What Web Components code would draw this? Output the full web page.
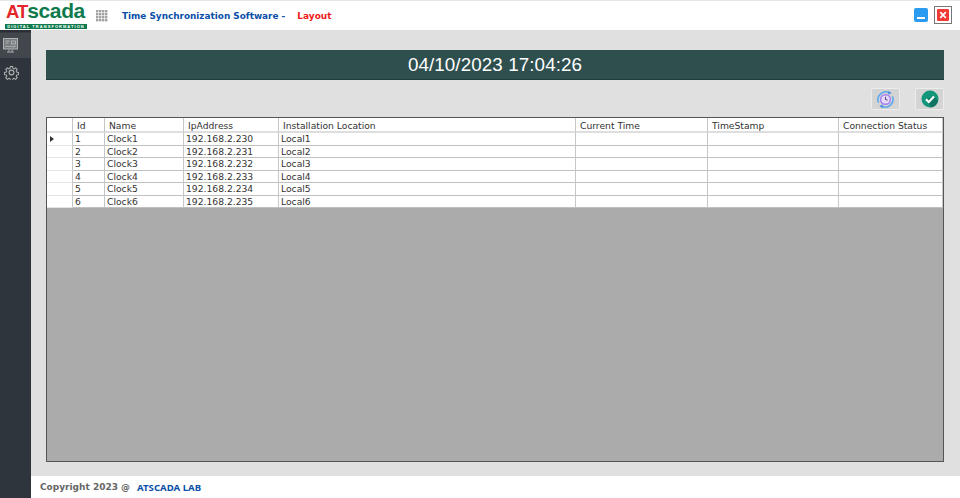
<!DOCTYPE html>
<html>
<head>
<meta charset="utf-8">
<style>
  html, body { margin: 0; height: 100%; overflow: hidden; }
  body { font-family: "DejaVu Sans", sans-serif; background: #fff; }
</style>
</head>
<body>
<app-shell>
  <title-bar slot="top"></title-bar>
  <side-bar slot="side"></side-bar>
  <clock-banner>04/10/2023 17:04:26</clock-banner>
  <action-bar></action-bar>
  <data-grid></data-grid>
  <page-footer slot="bottom"></page-footer>
</app-shell>
<script>
class AppShell extends HTMLElement {
    constructor() {
        super();
        this.attachShadow({ mode: 'open' });
        this.shadowRoot.innerHTML = `
            <style>
                :host { display: grid; width: 960px; height: 498px; grid-template: 30px 1fr 22px / 31px 1fr; }
                .top { grid-column: 1 / 3; }
                .side { grid-row: 2 / 4; }
                main { background: #e0e0e0; padding: 20px 16px 14px 15px; display: flex; flex-direction: column; min-height: 0; }
            </style>
            <div class="top"><slot name="top"></slot></div>
            <div class="side"><slot name="side"></slot></div>
            <main><slot></slot></main>
            <slot name="bottom"></slot>
        `;
    }
}

class TitleBar extends HTMLElement {
    constructor() {
        super();
        this.attachShadow({ mode: 'open' });
        let dots = '';
        for (let y = 0; y < 4; y++) {
            for (let x = 0; x < 4; x++) {
                dots += `<rect x="${x * 3}" y="${y * 3}" width="2.4" height="2.4" fill="#a2a2a2"/>`;
            }
        }
        this.shadowRoot.innerHTML = `
            <style>
                :host { display: flex; align-items: center; height: 30px; background: #fff; box-sizing: border-box; position: relative;
                    border-top: 1px solid #e6e6e6; }
                .logo { width: 82px; height: 26px; margin-left: 5px; display: flex; flex-direction: column; font-family: "Liberation Sans", sans-serif; font-weight: bold; flex: none; }
                .mark { display: flex; align-items: baseline; height: 20px; line-height: 20px; padding-left: 1px; }
                .at { color: #e3262b; font-size: 18.5px; letter-spacing: -1px; line-height: 18px; }
                .sc { color: #0f7a4d; font-size: 21px; letter-spacing: -.4px; line-height: 16px; }
                .tag { background: #0f7a4d; color: #fff; font-size: 4px; height: 5px; line-height: 5px; letter-spacing: 1.05px; text-align: center; white-space: nowrap; margin-top: 1px; }
                svg.grid { margin-left: 9px; flex: none; }
                .name { margin-left: 14px; color: #0b4fa8; font: bold 8.9px "DejaVu Sans", sans-serif; white-space: nowrap; }
                .page { margin-left: 12px; color: #ef1a1a; font: bold 9px "DejaVu Sans", sans-serif; }
                .btns { margin-left: auto; margin-right: 8px; display: flex; align-items: center; gap: 6px; margin-top: -1px; }
                .min { width: 14px; height: 14px; border-radius: 2px; background: #2a9bf0; display: flex; align-items: flex-end; justify-content: center; }
                .min i { display: block; width: 8px; height: 2px; background: #fff; margin-bottom: 3px; }
                .close { width: 18px; height: 18px; box-sizing: border-box; border: 1px solid #777; padding: 2px; }
                .close svg { display: block; width: 12px; height: 12px; }
            </style>
            <div class="logo">
                <div class="mark"><span class="at">AT</span><span class="sc">scada</span></div>
                <div class="tag">DIGITAL TRANSFORMATION</div>
            </div>
            <svg class="grid" width="12" height="12"><g>${dots}</g></svg>
            <span class="name">Time Synchronization Software -</span>
            <span class="page">Layout</span>
            <div class="btns">
                <div class="min"><i></i></div>
                <div class="close"><svg viewBox="0 0 12 12"><rect width="12" height="12" rx="1" fill="#f03a32"/><path d="M3.2 3.2l5.6 5.6M8.8 3.2l-5.6 5.6" stroke="#fff" stroke-width="1.7"/></svg></div>
            </div>
        `;
    }
}

class SideBar extends HTMLElement {
    constructor() {
        super();
        this.attachShadow({ mode: 'open' });
        this.shadowRoot.innerHTML = `
            <style>
                :host { display: flex; flex-direction: column; height: 100%; background: #2f353d; }
                .item { height: 28px; box-sizing: border-box; display: flex; align-items: center; padding-left: 3px; }
                .on { background: linear-gradient(#2b3036 0, #2b3036 2px, #41474d 3px); padding-top: 3px; }
                svg { fill: none; stroke: #b0b3b4; }
            </style>
            <div class="item on">
                <svg width="15" height="15" viewBox="0 0 15 15" stroke-width="1">
                    <rect x=".5" y=".5" width="14" height="10.5" fill="#777b7e"/>
                    <path d="M2.5 3h4M2.5 5h3M8.5 3h4v3h-4zM2 9l2-1 2 1 2-1 2 1 3-1"/>
                    <path d="M4 14h7M6 11.5v2M9 11.5v2"/>
                </svg>
            </div>
            <div class="item">
                <svg width="15" height="15" viewBox="0 0 24 24" stroke-width="1.8" style="margin-left:.5px">
                    <circle cx="12" cy="12" r="3.8"/>
                    <path d="M10 1.5h4l.6 3.2 2 .9 2.8-1.9 2.8 2.8-1.9 2.8.9 2 3.2.6v4l-3.2.6-.9 2 1.9 2.8-2.8 2.8-2.8-1.9-2 .9-.6 3.2h-4l-.6-3.2-2-.9-2.8 1.9-2.8-2.8 1.9-2.8-.9-2-3.2-.6v-4l3.2-.6.9-2-1.9-2.8 2.8-2.8 2.8 1.9 2-.9z" transform="translate(1.2 1.2) scale(.9)"/>
                </svg>
            </div>
        `;
    }
}

class ClockBanner extends HTMLElement {
    constructor() {
        super();
        this.attachShadow({ mode: 'open' });
        this.shadowRoot.innerHTML = `
            <style>
                :host { display: flex; align-items: center; justify-content: center; height: 30px; box-sizing: border-box; flex: none;
                    background: #2f4f4f; color: #fff; font: 18.8px "Liberation Sans", sans-serif; letter-spacing: .1px; border-bottom: 1px solid #1f3a3a; }
            </style>
            <slot></slot>
        `;
    }
}

class ActionBar extends HTMLElement {
    constructor() {
        super();
        this.attachShadow({ mode: 'open' });
        this.shadowRoot.innerHTML = `
            <style>
                :host { display: flex; justify-content: flex-end; gap: 15px; height: 23px; margin-top: 8px; margin-bottom: 6px; flex: none; }
                .b { width: 29px; height: 22px; box-sizing: border-box; background: #d4d4d4; border: 1px solid #ececec; border-radius: 2px; display: flex; align-items: center; justify-content: center; }
            </style>
            <div class="b">
                <svg width="19" height="19" viewBox="0 0 18 18" fill="none">
                    <path d="M2.4 12A7.4 7.4 0 0 1 13 2.8" stroke="#5aa9ee" stroke-width="1.5"/>
                    <path d="M15.6 6a7.4 7.4 0 0 1-10.6 9.2" stroke="#5aa9ee" stroke-width="1.5"/>
                    <path d="M12 .6l2.8 2.4-3.4 1.2zM6 17.4l-2.8-2.4 3.4-1.2z" fill="#4d8fe0"/>
                    <circle cx="9" cy="9" r="4.6" fill="#e6dcf7" stroke="#a57df0" stroke-width="1.4"/>
                    <path d="M9 6.4V9l2 .8" stroke="#5d4a8c" stroke-width="1"/>
                </svg>
            </div>
            <div class="b">
                <svg width="18" height="18" viewBox="0 0 18 18">
                    <circle cx="9" cy="9" r="8.5" fill="#14967a"/>
                    <path d="M13 6.6L17 10.4A8.5 8.5 0 0 1 10 17.4L5 9.2z" fill="#0f7560"/>
                    <path d="M5 9.2l2.8 2.8 5.2-5.4" fill="none" stroke="#fff" stroke-width="2.2"/>
                </svg>
            </div>
        `;
    }
}

class DataGrid extends HTMLElement {
    constructor() {
        super();
        this.attachShadow({ mode: 'open' });
        const heads = ['', 'Id', 'Name', 'IpAddress', 'Installation Location', 'Current Time', 'TimeStamp', 'Connection Status'];
        let cells = heads.map(h => `<div class="h">${h}</div>`).join('');
        for (let i = 1; i <= 6; i++) {
            cells += `<div class="c rh">${i === 1 ? '<svg width="4" height="6"><path d="M0 0l4 3-4 3z" fill="#333"/></svg>' : ''}</div>`;
            cells += `<div class="c">${i}</div><div class="c">Clock${i}</div><div class="c">192.168.2.${229 + i}</div><div class="c">Local${i}</div><div class="c"></div><div class="c"></div><div class="c"></div>`;
        }
        this.shadowRoot.innerHTML = `
            <style>
                :host { display: block; flex: 1; min-height: 0; box-sizing: border-box; background: #ababab; border: 1px solid #555; font: 9.2px "DejaVu Sans", sans-serif; color: #333; }
                .g { display: grid; grid-template-columns: 26px 32px 79px 95px 297px 132px 131px 1fr; grid-template-rows: 15px repeat(6, 12.55px); background: #fff; }
                .h, .c { box-sizing: border-box; border-right: 1px solid #c6c6c6; white-space: nowrap; overflow: hidden; }
                .h { padding-left: 4px; line-height: 15px; border-bottom: 2px solid #dedede; }
                .c { padding-left: 2px; line-height: 12px; border-bottom: 1px solid #c0c0c0; }
                .rh { display: flex; align-items: center; padding-left: 3px; border-bottom-color: #e4e4e4; }
                .h:last-child { border-right: 0; }
            </style>
            <div class="g">${cells}</div>
        `;
    }
}

class PageFooter extends HTMLElement {
    constructor() {
        super();
        this.attachShadow({ mode: 'open' });
        this.shadowRoot.innerHTML = `
            <style>
                :host { display: flex; align-items: center; background: #fff; padding-left: 9px; font: bold 9px "DejaVu Sans", sans-serif; color: #666; }
                b { color: #0b4fa8; margin-left: 7px; font: bold 9.6px "Noto Sans", sans-serif; }
            </style>
            <span>Copyright 2023 @</span><b>ATSCADA LAB</b>
        `;
    }
}

customElements.define('app-shell', AppShell);
customElements.define('title-bar', TitleBar);
customElements.define('side-bar', SideBar);
customElements.define('clock-banner', ClockBanner);
customElements.define('action-bar', ActionBar);
customElements.define('data-grid', DataGrid);
customElements.define('page-footer', PageFooter);
</script>
</body>
</html>
